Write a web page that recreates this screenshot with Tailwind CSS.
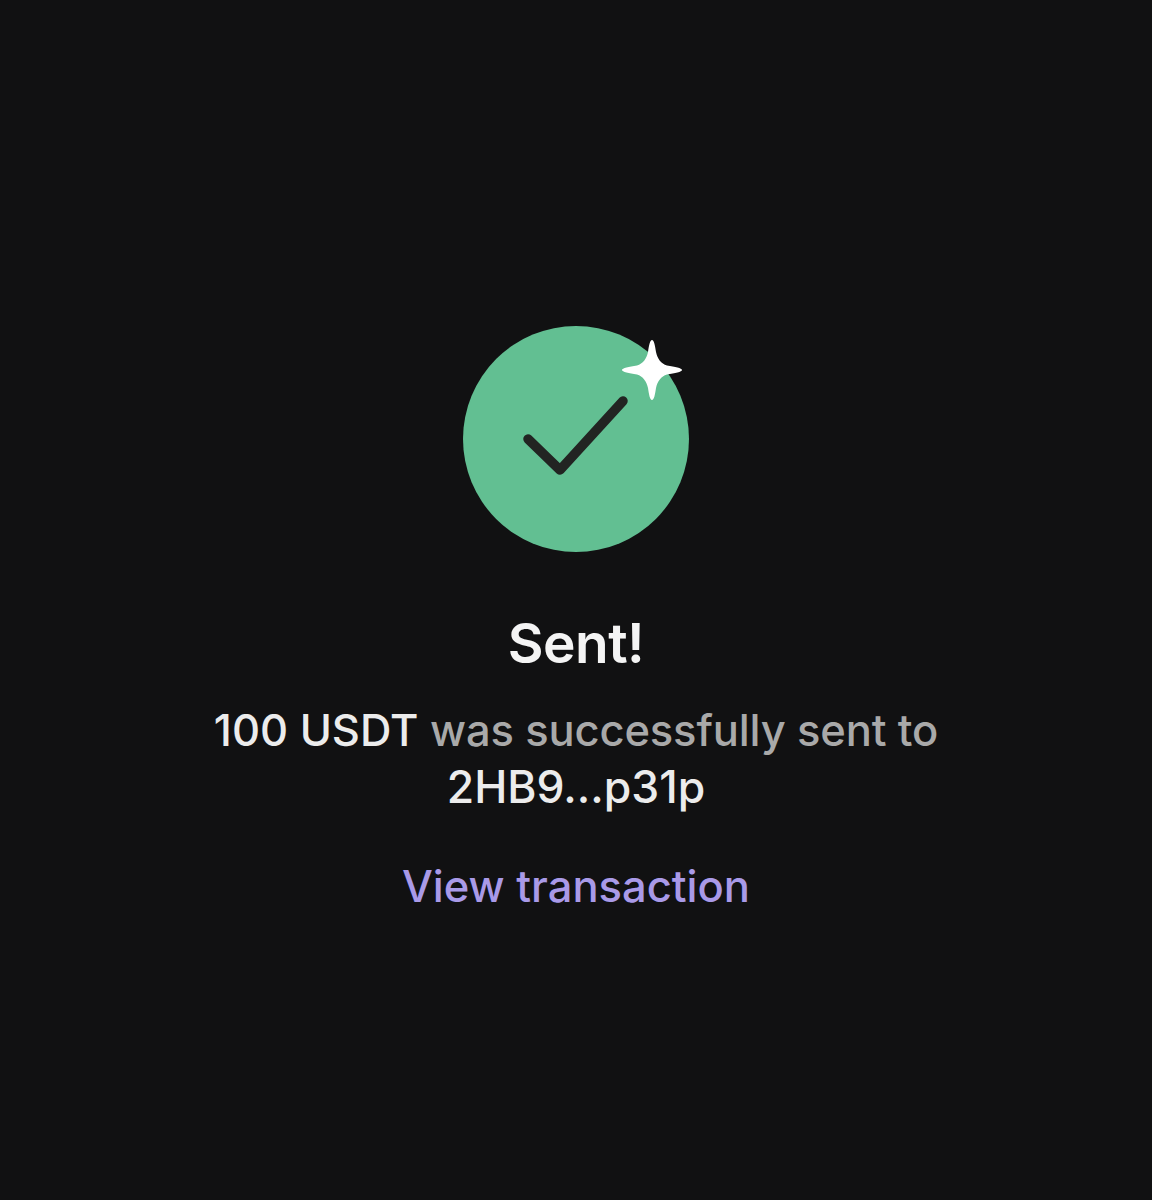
<!DOCTYPE html>
<html lang="en">
<head>
<meta charset="UTF-8">
<title>Sent</title>
<script src="https://cdn.jsdelivr.net/npm/@tailwindcss/browser@4"></script>
</head>
<body class="bg-[#111112] font-['Inter',sans-serif]">
  <main class="flex flex-col items-center w-[1152px] h-[1200px] pt-[326px]">
    <div class="relative w-[226px] h-[226px] rounded-full bg-[#62bf92]">
      <svg class="absolute inset-0" width="226" height="226" viewBox="0 0 226 226" fill="none">
        <path d="M65 113L97 144L160 75" stroke="#222422" stroke-width="9.500" stroke-linecap="round" stroke-linejoin="round"/>
        <path d="M189 14C191 14 192 19 193 26C194.500 33 198 37.500 204 39.500C212 41 219 42 219 44C219 46 212 47 204 48.500C198 50.500 194.500 55 193 62C192 69 191 74 189 74C187 74 186 69 185 62C183.500 55 180 50.500 174 48.500C166 47 159 46 159 44C159 42 166 41 174 39.500C180 37.500 183.500 33 185 26C186 19 187 14 189 14Z" fill="#fff"/>
      </svg>
    </div>
    <h1 class="mt-[61px] text-[55px] leading-[60px] font-semibold text-[#f4f4f4] tracking-[-0.5px]">Sent!</h1>
    <p class="mt-[29px] text-[43.500px] leading-[57px] text-center text-[#a9a9a9] font-medium"><span class="text-[#ececec]">100 USDT</span> <span class="tracking-[-0.15px]">was successfully sent to</span><br><span class="text-[#ececec] text-[44.500px]">2HB9...p31p</span></p>
    <a class="mt-[41px] text-[43.500px] leading-[58px] font-medium text-[#a99ae8]">View transaction</a>
  </main>
</body>
</html>
